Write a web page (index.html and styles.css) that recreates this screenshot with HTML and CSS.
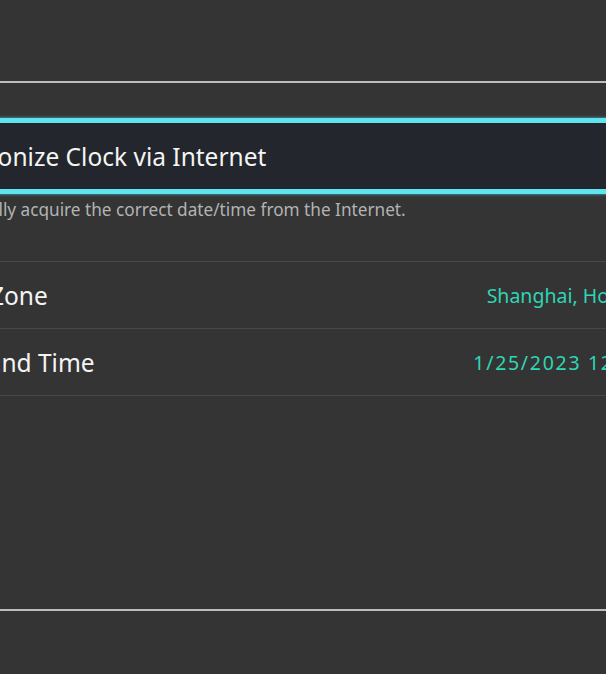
FILE: index.html
```html
<!DOCTYPE html>
<html>
<head>
<meta charset="utf-8">
<link rel="stylesheet" href="styles.css">
</head>
<body>
<div class="screen">
  <div class="header"></div>
  <div class="main">
    <div class="pane">
      <div class="selected">
        <span class="label">Synchronize Clock via Internet</span>
      </div>
      <div class="desc">Automatically acquire the correct date/time from the Internet.</div>
      <div class="list">
        <div class="row">
          <span class="label">Time Zone</span>
          <span class="value">Shanghai, Hong Kong</span>
        </div>
        <div class="row">
          <span class="label">Date and Time</span>
          <span class="value date">1/25/2023 12:20 PM</span>
        </div>
      </div>
    </div>
  </div>
  <div class="footer"></div>
</div>
</body>
</html>
```
FILE: styles.css
```css
html, body {
  margin: 0;
  padding: 0;
  background: #343434;
  overflow: hidden;
}
.screen {
  width: 606px;
  height: 674px;
  overflow: hidden;
  font-family: "Noto Sans", "Open Sans", sans-serif;
  color: #f2f2f2;
}
.header {
  height: 81px;
  border-bottom: 2px solid #bdbdbd;
}
.main {
  height: 526px;
  overflow: hidden;
}
.pane {
  margin-left: -96px;
  width: 800px;
  padding-top: 35px;
}
.selected {
  height: 66px;
  border: 5px solid #5fe4ef;
  box-shadow: 0 0 3px #3fb9c4;
  background: #23262c;
  display: flex;
  align-items: center;
  padding-left: 11px;
}
.label {
  font-size: 24.5px;
  color: #f4f4f4;
}
.desc {
  margin-top: 6px;
  padding-left: 2px;
  font-size: 17.2px;
  line-height: 20px;
  color: #b3b3b3;
}
.list {
  margin-top: 41px;
  border-top: 1px solid #484848;
}
.row {
  height: 66px;
  border-bottom: 1px solid #484848;
  display: flex;
  align-items: center;
  justify-content: space-between;
  padding: 0 18px 0 23px;
}
.value {
  font-size: 19.5px;
  color: #2fd6b5;
}
.date {
  letter-spacing: 1.7px;
}
.footer {
  border-top: 2px solid #bdbdbd;
  height: 65px;
}
```
